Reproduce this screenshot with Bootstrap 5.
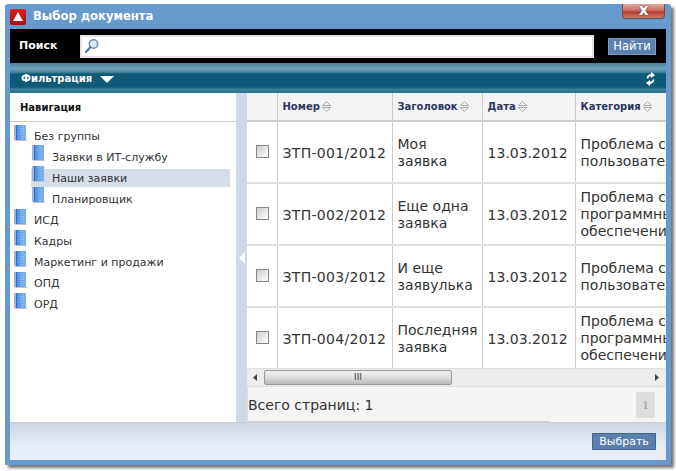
<!DOCTYPE html>
<html lang="ru"><head><meta charset="utf-8">
<link href="https://cdn.jsdelivr.net/npm/bootstrap@5.3.0/dist/css/bootstrap.min.css" rel="stylesheet">
<style>
html,body{height:471px;overflow:hidden;background:#fff}
body{font-family:"DejaVu Sans",Verdana,sans-serif;font-size:11px;color:#222;padding:4px 0 0 5px;line-height:1.2}
.win{width:666px;height:461px;background:#6699cc;padding:0 5px 5px;box-shadow:3px 3px 3px #777;border-radius:3px 3px 0 0;position:relative}
.ttl{height:25px;gap:7px;color:#fff;font-weight:700;font-size:11.6px}
.ttl .tx{padding-top:1px}
.appico{width:16px;height:16px;background:linear-gradient(#e21c1c,#a80f0f);border-radius:2px;display:flex;align-items:center;justify-content:center}
.xbtn{position:absolute;top:0;right:6px;width:43px;height:15px;overflow:hidden;background:linear-gradient(#dfa99e,#cf7a6c 40%,#b5402d 60%,#c4604f 80%,#b98075);border:1px solid #7a4a44;border-top:0;border-radius:0 0 4px 4px;color:#fff;font-weight:700;font-size:15px;line-height:12px;text-align:center;text-shadow:0 0 2px #422}
.srch{height:34px;background:#000;color:#fff;font-weight:700;font-size:11px;padding:0 10px 0 9px}
.srch .lbl{width:61px}
.inp{width:514px;height:23px;background:#fff;border:2px solid #e4e4e4;padding-left:2px}
.fnd{margin-left:14px;width:48px;height:17px;background:#5b7fae;color:#fff;border:1px solid #7c9cc4;font-size:11.5px;font-weight:400;line-height:15px;text-align:center}
.fbar{height:30px;background:linear-gradient(#4a8198 0,#6fa4b8 20%,#3a7d97 32%,#0f5a78 36%,#0f5a78 80%,#3e8098 88%,#2a6f8a 100%);color:#fff;font-weight:700;font-size:10px;padding:2px 11px 0 11px}
.tri{width:0;height:0;border-left:7px solid transparent;border-right:7px solid transparent;border-top:7px solid #fff;margin-left:8px}
.main{height:329px}
.nav-pane{width:226px;background:#fff}
.nav-h{height:29px;border-bottom:1px solid #ccc;font-weight:700;font-size:10px;color:#111;padding:1px 0 0 10px}
.tree{padding-top:2px;font-size:11px;color:#333}
.tn{height:21px;position:relative;padding-left:24px;display:flex;align-items:flex-end;padding-bottom:2px}
.tn.sub{padding-left:42px}
.tn svg{position:absolute;left:4px;top:1px}
.tn.sub svg{left:22px;top:0}
.tn.sel::before{content:"";position:absolute;left:21px;width:199px;top:3px;height:18px;background:#d5dde9;z-index:0}
.tn span,.tn svg{z-index:1}
.split{width:11px;background:#cdd9e6}
.stri{width:0;height:0;border-top:6px solid transparent;border-bottom:6px solid transparent;border-right:6px solid #fff}
.grid-pane{width:419px;background:#f3f3f3}
.tw{height:276px;overflow:hidden;background:#fff}
.gt{table-layout:fixed;width:419px;border-collapse:collapse;font-size:14px;color:#333}
.gt th{height:28px;background:#f4f4f4;font-size:10px;color:#2c3560;font-weight:700;border-right:1px solid #ccc;border-bottom:2px solid #ccc;padding:1px 0 0 5px;white-space:nowrap}
.gt td{height:62px;border-right:1px solid #ccc;border-bottom:2px solid #ddd;padding:1px 0 0 5px;line-height:17px;overflow:hidden;white-space:nowrap}
.gt td.cb{padding:0 0 2px 1px;text-align:center}
.gt td.num{letter-spacing:.3px;padding-top:3px}
.gt td.dt{padding-top:3px}
.gt th:last-child,.gt td:last-child{border-right:0}
.chk{display:inline-block;width:13px;height:13px;border:1px solid #888;background:linear-gradient(135deg,#ccc,#fff);vertical-align:middle}
.sorti{display:inline-block;vertical-align:-2px;margin-left:2px}
.sb{height:18px;background:#ececec;border-bottom:1px solid #ddd;position:relative;padding:0 6px}
.thumb{position:absolute;left:17px;top:1px;width:188px;height:15px;background:linear-gradient(#efefef,#ddd 50%,#bbb);border:1px solid #999;border-radius:2px;font-size:9px;line-height:13px;text-align:center;color:#444}
.pg{height:34px;background:#f4f4f4 linear-gradient(#ccc,#ccc) left bottom/301px 1px no-repeat;padding:0 11px 0 0;font-size:14px;color:#333;border-left:1px solid #ddd}
.pg .tot{padding-top:2px}
.pnum{width:19px;height:26px;background:#ddd;color:#999;font-family:"Liberation Serif",serif;font-size:13px;line-height:26px;text-align:center}
.foot{height:38px;background:linear-gradient(#cdd7e4,#e7edf6 65%,#eaf0f9);border-top:1px solid #ccc;padding:0 10px 0 0;justify-content:flex-end}
.sel-btn{width:64px;height:17px;background:#5b7fae;color:#fff;border:1px solid #44668f;font-size:11px;line-height:15px;text-align:center}
</style></head><body>
<svg width="0" height="0" class="position-absolute"><defs>
<linearGradient id="bg" x1="0" x2="1" y1="0" y2="0"><stop offset="0" stop-color="#3f86dd"/><stop offset="1" stop-color="#7fb2ef"/></linearGradient>
<symbol id="bk" viewBox="0 0 13 16"><rect x="0" y="0" width="12" height="15" fill="url(#bg)"/><rect x="0" y="0" width="2" height="15" fill="#9fb6d2"/><rect x="2" y="0" width="1" height="15" fill="#2f6fc0"/><path d="M7 1v13M9 1v13" stroke="#a9cbf5" stroke-dasharray="1 1"/><rect x="1" y="15" width="12" height="1" fill="#c4c4c4"/></symbol>
<symbol id="srt" viewBox="0 0 9 11"><path d="M.5 4.5 4.5.5l4 4z M.5 6.5h8l-4 4z" fill="none" stroke="#aaa"/></symbol>
</defs></svg>
<div class="win d-flex flex-column">
<div class="xbtn">x</div>
<div class="ttl d-flex align-items-center"><span class="appico"><svg width="10" height="9" viewBox="0 0 10 9"><path d="M5 0 10 9H0z" fill="#fff"/></svg></span><span class="tx">Выбор документа</span></div>
<div class="srch d-flex align-items-center"><span class="lbl">Поиск</span><div class="inp d-flex align-items-center"><svg width="16" height="16" viewBox="0 0 16 16"><circle cx="9.5" cy="6" r="4.2" fill="#dfe9f3" stroke="#6f93b5" stroke-width="1.6"/><path d="M6.5 9 2 14" stroke="#4f7aa3" stroke-width="2.2" stroke-linecap="round"/></svg></div><div class="fnd">Найти</div></div>
<div class="fbar d-flex align-items-center justify-content-between"><div class="d-flex align-items-center"><span>Фильтрация</span><span class="tri"></span></div><svg width="9" height="14" viewBox="0 0 9 14"><path d="M5 0l4 3-4 3V4.2C3.5 4.2 2.6 5 2.4 6.4H.6C.8 3.8 2.6 2 5 1.9zM4 14l-4-3 4-3v1.8c1.5 0 2.4-.8 2.6-2.2h1.8C8.2 10.2 6.4 12 4 12.1z" fill="#fff"/></svg></div>
<div class="main d-flex">
<div class="nav-pane">
<div class="nav-h d-flex align-items-center">Навигация</div>
<div class="tree">
<div class="tn"><svg width="13" height="16"><use href="#bk"/></svg><span>Без группы</span></div>
<div class="tn sub"><svg width="13" height="16"><use href="#bk"/></svg><span>Заявки в ИТ-службу</span></div>
<div class="tn sub sel"><svg width="13" height="16"><use href="#bk"/></svg><span>Наши заявки</span></div>
<div class="tn sub"><svg width="13" height="16"><use href="#bk"/></svg><span>Планировщик</span></div>
<div class="tn"><svg width="13" height="16"><use href="#bk"/></svg><span>ИСД</span></div>
<div class="tn"><svg width="13" height="16"><use href="#bk"/></svg><span>Кадры</span></div>
<div class="tn"><svg width="13" height="16"><use href="#bk"/></svg><span>Маркетинг и продажи</span></div>
<div class="tn"><svg width="13" height="16"><use href="#bk"/></svg><span>ОПД</span></div>
<div class="tn"><svg width="13" height="16"><use href="#bk"/></svg><span>ОРД</span></div>
</div></div>
<div class="split d-flex align-items-center justify-content-center"><span class="stri"></span></div>
<div class="grid-pane d-flex flex-column">
<div class="tw"><table class="gt"><colgroup><col style="width:30px"><col style="width:115px"><col style="width:90px"><col style="width:93px"><col style="width:91px"></colgroup>
<thead><tr><th></th><th>Номер<svg class="sorti" width="9" height="11"><use href="#srt"/></svg></th><th>Заголовок<svg class="sorti" width="9" height="11"><use href="#srt"/></svg></th><th>Дата<svg class="sorti" width="9" height="11"><use href="#srt"/></svg></th><th>Категория<svg class="sorti" width="9" height="11"><use href="#srt"/></svg></th></tr></thead>
<tbody>
<tr><td class="cb"><span class="chk"></span></td><td class="num">ЗТП-001/2012</td><td>Моя<br>заявка</td><td class="dt">13.03.2012</td><td>Проблема с<br>пользователем</td></tr>
<tr><td class="cb"><span class="chk"></span></td><td class="num">ЗТП-002/2012</td><td>Еще одна<br>заявка</td><td class="dt">13.03.2012</td><td>Проблема с<br>программным<br>обеспечением</td></tr>
<tr><td class="cb"><span class="chk"></span></td><td class="num">ЗТП-003/2012</td><td>И еще<br>заявулька</td><td class="dt">13.03.2012</td><td>Проблема с<br>пользователем</td></tr>
<tr><td class="cb"><span class="chk"></span></td><td class="num">ЗТП-004/2012</td><td>Последняя<br>заявка</td><td class="dt">13.03.2012</td><td>Проблема с<br>программным<br>обеспечением</td></tr>
</tbody></table></div>
<div class="sb d-flex align-items-center justify-content-between"><svg width="5" height="7"><path d="M4 0v7L0 3.5z" fill="#444"/></svg><div class="thumb">III</div><svg width="5" height="7"><path d="M0 0v7l4-3.5z" fill="#444"/></svg></div>
<div class="pg d-flex align-items-center justify-content-between flex-grow-1"><span class="tot">Всего страниц: 1</span><span class="pnum">1</span></div>
</div></div>
<div class="foot d-flex align-items-center"><div class="sel-btn">Выбрать</div></div>
</div>
</body></html>
